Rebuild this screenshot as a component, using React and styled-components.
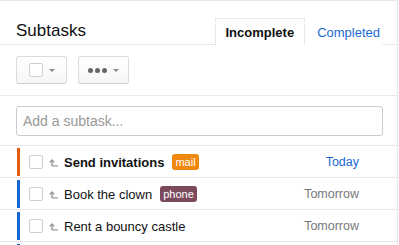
import React from 'react';
import styled, { createGlobalStyle } from 'styled-components';

const GlobalStyle = createGlobalStyle`
    body {
        margin: 0;
        background: #fff;
        font-family: "Liberation Sans", Arial, sans-serif;
    }
`;

const subtasks = [
    { id: 1, title: 'Send invitations', bold: true, tag: 'mail', bar: '#e65a12', due: 'Today' },
    { id: 2, title: 'Book the clown', tag: 'phone', bar: '#1565d2', due: 'Tomorrow' },
    { id: 3, title: 'Rent a bouncy castle', bar: '#1565d2', due: 'Tomorrow' },
];

const tagColors = {
    mail: '#ef880e',
    phone: '#7c4a5d',
};

function LevelUpIcon() {
    return (
        <svg width="9" height="9" viewBox="0 0 9 9">
            <path d="M3 8.3V2.2M0.8 4.3L3 2L5.2 4.3M3 7.9H9" fill="none" stroke="#9a9a9a" strokeWidth="1.4" />
        </svg>
    );
}

function App() {
    return (
        <Panel>
            <GlobalStyle />
            <Header>
                <Title>Subtasks</Title>
                <Tabs>
                    <Tab active>Incomplete</Tab>
                    <Tab>Completed</Tab>
                </Tabs>
            </Header>
            <Toolbar>
                <DropButton>
                    <Check />
                    <Caret />
                </DropButton>
                <DropButton>
                    <Dots>
                        <span /><span /><span />
                    </Dots>
                    <Caret />
                </DropButton>
            </Toolbar>
            <AddRow>
                <AddInput placeholder="Add a subtask..." />
            </AddRow>
            {subtasks.map(task => (
                <Row key={task.id}>
                    <Bar color={task.bar} />
                    <Check />
                    <IconSlot><LevelUpIcon /></IconSlot>
                    <TaskTitle bold={task.bold}>{task.title}</TaskTitle>
                    {task.tag && <Tag color={tagColors[task.tag]}>{task.tag}</Tag>}
                    <Due today={task.due === 'Today'}>{task.due}</Due>
                </Row>
            ))}
            <NextRow>
                <Bar color="#1565d2" />
            </NextRow>
        </Panel>
    );
}

const Panel = styled.div`
    width: 398px;
    height: 245px;
    box-sizing: border-box;
    border-top: 1px solid #e8e8e8;
    border-right: 1px solid #e8e8e8;
    overflow: hidden;
    background: #fff;
`;

const Header = styled.div`
    height: 44px;
    box-sizing: border-box;
    display: flex;
    align-items: flex-end;
    padding-left: 16px;
    border-bottom: 1px dotted #d6d6d6;
`;

const Title = styled.h2`
    margin: 0 0 3px;
    font-size: 17px;
    line-height: 20px;
    font-weight: normal;
    color: #111;
`;

const Tabs = styled.div`
    display: flex;
    align-items: flex-end;
    margin-left: auto;
    margin-right: 16px;
`;

const Tab = styled.div`
    position: relative;
    margin-bottom: -1px;
    padding: 6px 10px 4px;
    font-size: 13px;
    line-height: 16px;
    font-weight: ${p => (p.active ? 'bold' : 'normal')};
    color: ${p => (p.active ? '#111' : '#1a6ad4')};
    background: #fff;
    border: 1px dotted ${p => (p.active ? '#d6d6d6' : 'transparent')};
    border-bottom: none;
    ${p => !p.active && 'padding-left: 11px; padding-right: 0;'}
`;

const Toolbar = styled.div`
    display: flex;
    gap: 11px;
    padding: 11px 16px 11px;
    border-bottom: 1px dotted #d6d6d6;
`;

const DropButton = styled.div`
    width: 51px;
    height: 28px;
    box-sizing: border-box;
    display: flex;
    align-items: center;
    justify-content: center;
    gap: 6px;
    border: 1px solid #dcdcdc;
    border-bottom-color: #c9ccd4;
    border-radius: 3px;
    background: linear-gradient(#fff, #f6f6f6);
`;

const Caret = styled.span`
    width: 0;
    height: 0;
    border-left: 3px solid transparent;
    border-right: 3px solid transparent;
    border-top: 3px solid #8a8a8a;
`;

const Dots = styled.span`
    display: flex;
    gap: 2px;
    span {
        width: 5px;
        height: 5px;
        border-radius: 50%;
        background: #666;
    }
`;

const Check = styled.span`
    width: 14px;
    height: 14px;
    box-sizing: border-box;
    border: 1px solid #cfcfcf;
    border-radius: 2px;
    background: #fff;
    flex-shrink: 0;
`;

const AddRow = styled.div`
    padding: 10px 14px 9px 16px;
    border-bottom: 1px dotted #d6d6d6;
`;

const AddInput = styled.input`
    display: block;
    width: 100%;
    height: 30px;
    box-sizing: border-box;
    padding: 0 6px;
    border: 1px solid #cccccc;
    border-radius: 3px;
    font-family: inherit;
    font-size: 14px;
    color: #333;
    outline: none;
    &::placeholder {
        color: #999;
    }
`;

const Row = styled.div`
    height: 32px;
    box-sizing: border-box;
    display: flex;
    align-items: center;
    padding: 2px 38px 1px 17px;
    border-bottom: 1px dotted #d6d6d6;
`;

const NextRow = styled.div`
    display: flex;
    height: 10px;
    padding: 2px 0 0 17px;
`;

const Bar = styled.span`
    align-self: stretch;
    width: 3px;
    margin-right: 9px;
    background: ${p => p.color};
`;

const IconSlot = styled.span`
    display: flex;
    margin: 0 6px 0 6px;
`;

const TaskTitle = styled.span`
    font-size: 13px;
    font-weight: ${p => (p.bold ? 'bold' : 'normal')};
    color: #111;
`;

const Tag = styled.span`
    margin-left: 8px;
    padding: 0 3px;
    height: 16px;
    line-height: 16px;
    border-radius: 3px;
    font-size: 11px;
    color: #fff;
    background: ${p => p.color};
`;

const Due = styled.span`
    margin-left: auto;
    font-size: 12.5px;
    color: ${p => (p.today ? '#1a6ad4' : '#777')};
`;

export default App;
